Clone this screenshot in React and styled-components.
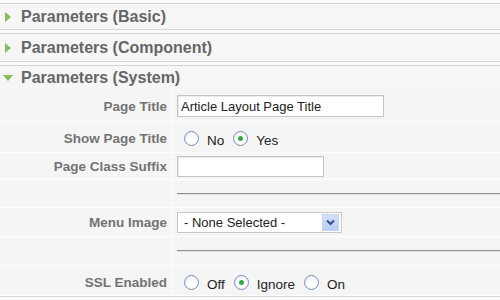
import React from "react";
import styled, { createGlobalStyle } from "styled-components";

const Global = createGlobalStyle`
  html, body {
    margin: 0;
    padding: 0;
    background: #fbfbfb;
    width: 500px;
    height: 300px;
    overflow: hidden;
    font-family: "Liberation Sans", Arial, sans-serif;
  }
`;

const Page = styled.div`
  padding-top: 3px;
`;

const Panel = styled.div`
  border-top: 1px solid #d6d6d6;
  border-bottom: 1px solid #d6d6d6;
  margin-bottom: 3px;
  background: #f6f6f6;
`;

const Header = styled.div`
  display: flex;
  align-items: center;
  height: ${(p) => p.h}px;
  padding-left: 3px;
  font-size: 16px;
  font-weight: bold;
  color: #666;
`;

const Arrow = styled.span`
  display: inline-flex;
  justify-content: center;
  width: 10px;
  margin-right: 8px;
`;

const Table = styled.div`
  background: #f5f5f5;
`;

const Row = styled.div`
  display: grid;
  grid-template-columns: 172px 1fr;
  height: ${(p) => p.h}px;
`;

const Key = styled.div`
  display: flex;
  align-items: center;
  justify-content: flex-end;
  padding-right: 4px;
  padding-top: ${(p) => p.drop || 0}px;
  font-size: 13.5px;
  font-weight: bold;
  color: #737373;
  border-right: 1px solid #fdfdfd;
  border-bottom: 1px solid #fdfdfd;
`;

const Value = styled.div`
  display: flex;
  align-items: center;
  padding-left: 5px;
  padding-top: ${(p) => p.drop || 0}px;
  border-bottom: 1px solid #fdfdfd;
`;

const TextInput = styled.div`
  box-sizing: border-box;
  width: ${(p) => p.w}px;
  height: ${(p) => p.h}px;
  border: 1px solid #c4c4c4;
  box-shadow: inset 1px 1px 0 #ececec;
  background: #fff;
  padding-left: 3px;
  display: flex;
  align-items: center;
  font-size: 13px;
  color: #222;
`;

const Select = styled.div`
  box-sizing: border-box;
  width: 165px;
  height: 21px;
  border: 1px solid #c8c8c8;
  background: #fff;
  display: flex;
  align-items: center;
  justify-content: space-between;
  padding: 1px;
  padding-left: 6px;
  font-size: 13px;
  color: #222;
`;

const SelectButton = styled.span`
  box-sizing: border-box;
  width: 17px;
  height: 17px;
  margin-right: 1px;
  background: linear-gradient(#d3e0fb, #b9cdf7);
  border: 1px solid #c3d3f5;
  display: flex;
  align-items: center;
  justify-content: center;
`;

const Hr = styled.div`
  flex: 1;
  height: 0;
  border-top: 1px solid #8e8e8e;
  border-bottom: 1px solid #e2e2e2;
`;

const RadioGroup = styled.div`
  display: flex;
  align-items: center;
  padding-left: 7px;
`;

const RadioItem = styled.label`
  display: flex;
  align-items: center;
  margin-right: 9px;
  font-size: 13.5px;
  color: #222;
`;

const Circle = styled.span`
  box-sizing: border-box;
  width: 15px;
  height: 15px;
  border-radius: 50%;
  border: 1px solid #7890b4;
  background: radial-gradient(circle at 60% 60%, #fff 30%, #e2e7ef 100%);
  display: flex;
  align-items: center;
  justify-content: center;
  margin-right: 8px;
  &::after {
    content: "";
    width: 5px;
    height: 5px;
    border-radius: 50%;
    background: ${(p) => (p.checked ? "#2fae3d" : "transparent")};
  }
`;

const RadioText = styled.span`
  padding-top: 4px;
`;

const RightTri = () => (
  <svg width="6" height="10" viewBox="0 0 6 10">
    <polygon points="0,0 6,5 0,10" fill="#86bd58" />
  </svg>
);

const DownTri = () => (
  <svg width="10" height="6" viewBox="0 0 10 6">
    <polygon points="0,0 10,0 5,6" fill="#86bd58" />
  </svg>
);

const Radio = ({ label, checked }) => (
  <RadioItem>
    <Circle checked={checked} />
    <RadioText>{label}</RadioText>
  </RadioItem>
);

export default function App() {
  return (
    <Page>
      <Global />
      <Panel>
        <Header h={25}>
          <Arrow><RightTri /></Arrow>
          Parameters (Basic)
        </Header>
      </Panel>
      <Panel>
        <Header h={27}>
          <Arrow><RightTri /></Arrow>
          Parameters (Component)
        </Header>
      </Panel>
      <Panel>
        <Header h={24}>
          <Arrow><DownTri /></Arrow>
          Parameters (System)
        </Header>
        <Table>
          <Row h={32}>
            <Key drop={2}>Page Title</Key>
            <Value drop={1}>
              <TextInput w={207} h={22}>Article Layout Page Title</TextInput>
            </Value>
          </Row>
          <Row h={31}>
            <Key drop={2}>Show Page Title</Key>
            <Value drop={2}>
              <RadioGroup>
                <Radio label="No" />
                <Radio label="Yes" checked />
              </RadioGroup>
            </Value>
          </Row>
          <Row h={27}>
            <Key drop={1}>Page Class Suffix</Key>
            <Value drop={1}>
              <TextInput w={147} h={21} />
            </Value>
          </Row>
          <Row h={28}>
            <Key />
            <Value>
              <Hr />
            </Value>
          </Row>
          <Row h={29}>
            <Key drop={1}>Menu Image</Key>
            <Value drop={1}>
              <Select>
                - None Selected -
                <SelectButton>
                  <svg width="9" height="7" viewBox="0 0 9 7">
                    <polyline points="1,1.5 4.5,5 8,1.5" fill="none" stroke="#34508a" strokeWidth="2" />
                  </svg>
                </SelectButton>
              </Select>
            </Value>
          </Row>
          <Row h={29}>
            <Key />
            <Value>
              <Hr />
            </Value>
          </Row>
          <Row h={30}>
            <Key drop={3}>SSL Enabled</Key>
            <Value drop={3}>
              <RadioGroup>
                <Radio label="Off" />
                <Radio label="Ignore" checked />
                <Radio label="On" />
              </RadioGroup>
            </Value>
          </Row>
        </Table>
      </Panel>
    </Page>
  );
}
